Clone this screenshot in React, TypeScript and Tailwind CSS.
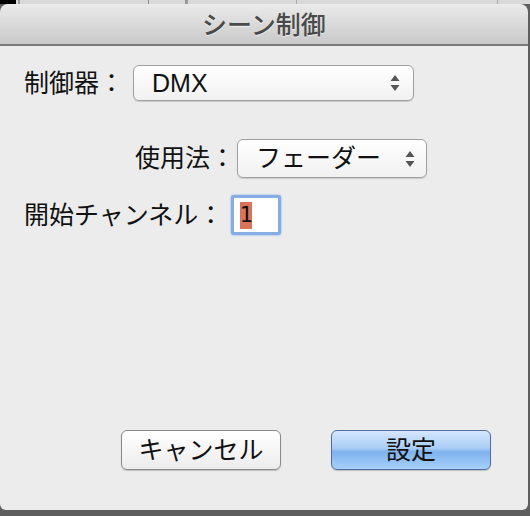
import React from 'react';

const JP = "font-['Liberation_Sans','Noto_Sans_CJK_JP',sans-serif]";

const Arrows = () => (
  <svg width="12" height="18" viewBox="0 0 12 18" className="shrink-0">
    <path d="M6 1 L10.5 7 L1.5 7 Z" fill="#555" />
    <path d="M6 17 L10.5 11 L1.5 11 Z" fill="#555" />
  </svg>
);

const Select = ({ value, className, textClass }: { value: string; className: string; textClass: string }) => (
  <div
    className={`flex items-center justify-between rounded-[6px] border border-[#a0a0a0] bg-gradient-to-b from-white to-[#f1f1f1] shadow-[0_1px_1px_rgba(0,0,0,0.15)] ${className}`}
  >
    <span className={`text-[25px] leading-none text-[#111] ${textClass}`}>{value}</span>
    <Arrows />
  </div>
);

export default function App() {
  return (
    <div className={`w-[530px] h-[516px] bg-[#5e5e5e] overflow-hidden flex flex-col ${JP}`}>
      {/* window behind the sheet */}
      <div className="h-[4px] flex bg-[#d9d9d9] shrink-0">
        <div className="w-[16px] bg-black" />
        <div className="w-[2px] ml-[2px] bg-[#9a9a9a]" />
        <div className="w-[1px] ml-[128px] bg-[#8a8a8a]" />
        <div className="w-[3px] ml-[36px] bg-[#9a9a9a]" />
        <div className="w-[1px] ml-[108px] bg-[#aaa]" />
        <div className="w-[1px] ml-[200px] bg-[#aaa]" />
      </div>

      <div className="w-[528px] h-[506px] flex flex-col rounded-t-[8px] overflow-hidden">
        <div className="h-[42px] shrink-0 flex items-center justify-center bg-gradient-to-b from-[#ebebeb] to-[#c9c9c9] border-b-2 border-[#7a7a7a]">
          <span className="text-[25px] font-medium leading-none text-[#4a4a4a] [text-shadow:0_1px_0_rgba(255,255,255,0.6)] mt-[2px]">
            シーン制御
          </span>
        </div>

        <div className="flex-1 bg-[#ececec] flex flex-col rounded-b-[6px]">
          <div className="flex items-center mt-[19px] pl-[24px]">
            <span className="w-[109px] text-[25px] leading-none text-[#111]">制御器：</span>
            <Select value="DMX" textClass="font-medium" className="w-[281px] h-[36px] pl-[18px] pr-[12px]" />
          </div>

          <div className="flex items-center mt-[38px]">
            <span className="w-[237px] pr-[2px] text-right text-[25px] leading-none text-[#111]">使用法：</span>
            <Select value="フェーダー" textClass="" className="w-[190px] h-[39px] pl-[18px] pr-[10px]" />
          </div>

          <div className="flex items-center mt-[17px] pl-[24px]">
            <span className="w-[207px] text-[25px] leading-none text-[#111]">開始チャンネル：</span>
            <div className="w-[50px] h-[40px] rounded-[3px] border-[3px] border-[#86aee6] shadow-[0_0_2px_#6a9ee0] bg-white flex items-center pl-[6px]">
              <span className="bg-[#d9735a] h-[27px] w-[12px] flex items-center justify-center text-[22px] leading-none text-[#111] font-['DejaVu_Sans_Mono',monospace]">
                1
              </span>
            </div>
          </div>

          <div className="flex mt-[195px] pl-[121px] gap-[50px]">
            <div className="w-[160px] h-[40px] rounded-[6px] border border-[#8a8a8a] bg-gradient-to-b from-white to-[#ececec] shadow-[0_1px_1px_rgba(0,0,0,0.2)] flex items-center justify-center">
              <span className="text-[25px] leading-none text-[#111]">キャンセル</span>
            </div>
            <div className="w-[160px] h-[40px] rounded-[6px] border border-[#4f6f9f] bg-[linear-gradient(to_bottom,#d6e7fc_0%,#a9cdf6_45%,#7fb3ee_55%,#a6d0fa_100%)] shadow-[0_1px_1px_rgba(0,0,0,0.2)] flex items-center justify-center">
              <span className="text-[25px] leading-none text-[#111]">設定</span>
            </div>
          </div>
        </div>
      </div>
    </div>
  );
}
